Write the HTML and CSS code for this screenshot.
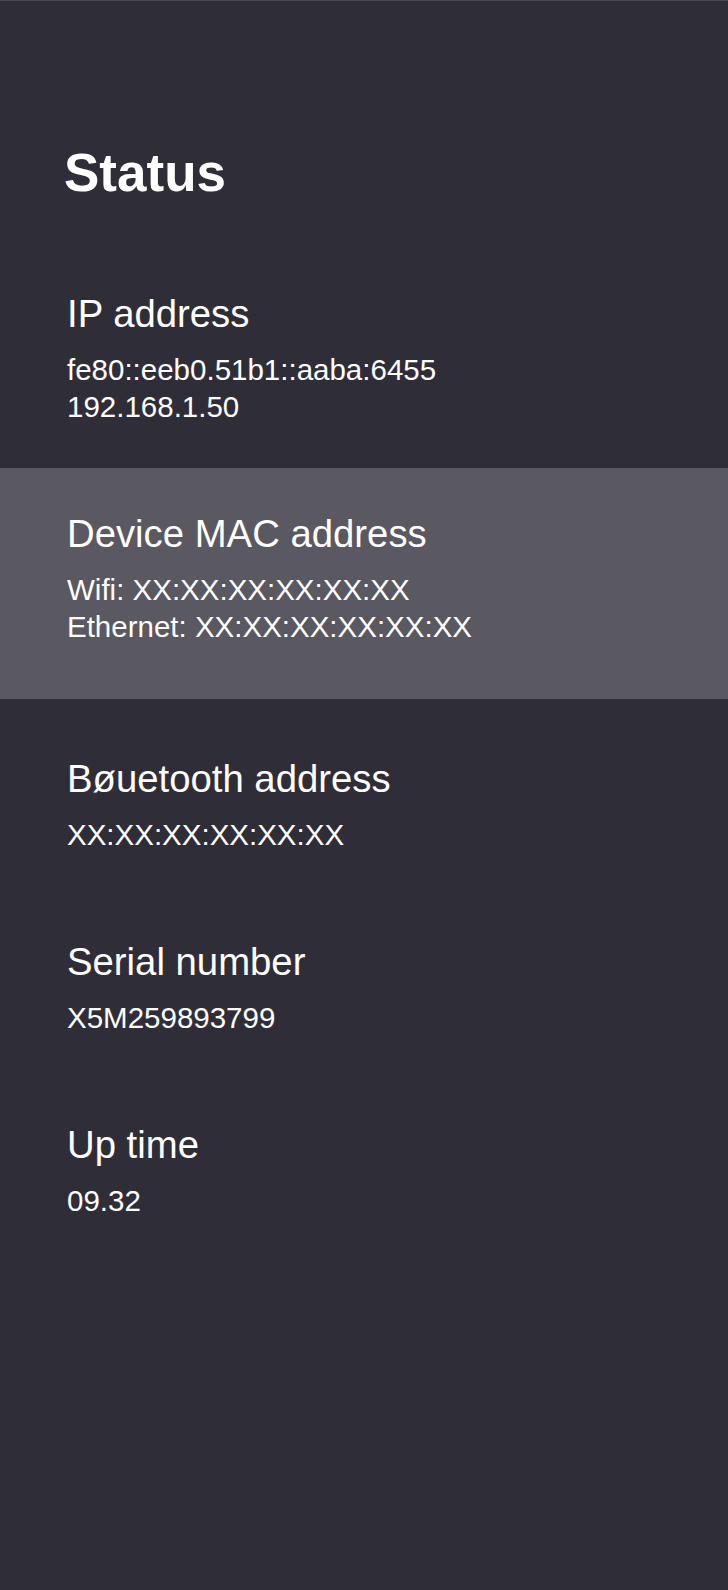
FILE: index.html
```html
<!DOCTYPE html>
<html lang="en">
<head>
<meta charset="utf-8">
<title>Status</title>
<link rel="stylesheet" href="styles.css">
</head>
<body>
<main class="screen">
  <h1 class="title">Status</h1>
  <ul class="list">
    <li class="item">
      <div class="label">IP address</div>
      <div class="value">fe80::eeb0.51b1::aaba:6455<br>192.168.1.50</div>
    </li>
    <li class="item item--focused">
      <div class="label">Device MAC address</div>
      <div class="value">Wifi: XX:XX:XX:XX:XX:XX<br>Ethernet: XX:XX:XX:XX:XX:XX</div>
    </li>
    <li class="item">
      <div class="label">Bøuetooth address</div>
      <div class="value">XX:XX:XX:XX:XX:XX</div>
    </li>
    <li class="item">
      <div class="label">Serial number</div>
      <div class="value">X5M259893799</div>
    </li>
    <li class="item">
      <div class="label">Up time</div>
      <div class="value">09.32</div>
    </li>
  </ul>
</main>
</body>
</html>
```

FILE: styles.css
```css
html, body {
  margin: 0;
  padding: 0;
  background: #2f2e38;
}

body {
  font-family: "Liberation Sans", Arial, Helvetica, sans-serif;
  color: #ffffff;
}

.screen {
  min-height: 1589px;
  border-top: 1px solid #4b4b4e;
  background: #2f2e38;
  padding-top: 142px;
  box-sizing: border-box;
}

.title {
  margin: 0 0 45px;
  padding-left: 64px;
  font-size: 53px;
  line-height: 60px;
  font-weight: 700;
}

.list {
  list-style: none;
  margin: 0;
  padding: 0;
}

.item {
  padding: 44px 0 43px 67px;
}

.item--focused {
  background: #5a5860;
  padding-bottom: 54px;
}

.item--focused + .item {
  padding-top: 58px;
}

.label {
  font-size: 38.3px;
  line-height: 44px;
}

.value {
  margin-top: 15px;
  font-size: 29.5px;
  line-height: 37px;
}
```
